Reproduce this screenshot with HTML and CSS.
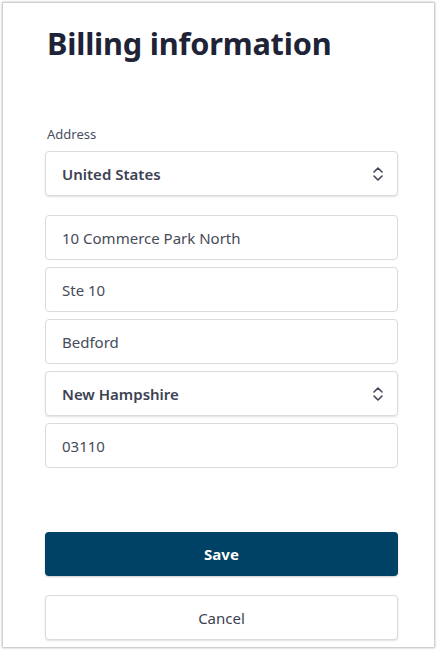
FILE: index.html
```html
<!DOCTYPE html>
<html lang="en">
<head>
<meta charset="utf-8">
<title>Billing information</title>
<link rel="stylesheet" href="styles.css">
</head>
<body>
<main class="card">
  <h1 class="title">Billing information</h1>
  <form class="form">
    <label class="label">Address</label>
    <div class="field select">
      <span>United States</span>
      <svg class="chev" width="12" height="16" viewBox="0 0 12 16"><path d="M2 6 L6 2 L10 6 M2 10 L6 14 L10 10" fill="none" stroke="#3f4556" stroke-width="1.6" stroke-linecap="round" stroke-linejoin="round"/></svg>
    </div>
    <div class="field input first">10 Commerce Park North</div>
    <div class="field input">Ste 10</div>
    <div class="field input">Bedford</div>
    <div class="field select">
      <span>New Hampshire</span>
      <svg class="chev" width="12" height="16" viewBox="0 0 12 16"><path d="M2 6 L6 2 L10 6 M2 10 L6 14 L10 10" fill="none" stroke="#3f4556" stroke-width="1.6" stroke-linecap="round" stroke-linejoin="round"/></svg>
    </div>
    <div class="field input">03110</div>
    <button type="button" class="btn save">Save</button>
    <button type="button" class="btn cancel">Cancel</button>
  </form>
</main>
</body>
</html>
```

FILE: styles.css
```css
* { box-sizing: border-box; }
html, body { margin: 0; padding: 0; background: #ffffff; }
body {
  font-family: "Noto Sans", "Open Sans", sans-serif;
  padding: 3px 4px 9px 3px;
}
.card {
  width: 431px;
  height: 644px;
  background: #fff;
  box-shadow: 0 0 2px 1px rgba(0,0,0,0.28);
  padding: 18px 36px 0 42px;
  overflow: hidden;
}
.title {
  margin: 0 0 0 2px;
  font-size: 30.7px;
  line-height: 44px;
  font-weight: 700;
  color: #1e2337;
  letter-spacing: -0.2px;
}
.form {
  display: flex;
  flex-direction: column;
  margin-top: 60px;
}
.label {
  font-size: 13px;
  line-height: 18px;
  color: #4a5062;
  margin-left: 2px;
  margin-bottom: 8px;
}
.field {
  height: 45px;
  border: 1px solid #d8dbe0;
  border-radius: 4px;
  display: flex;
  align-items: center;
  padding: 0 16px;
  font-size: 15px;
  color: #464b59;
  margin-bottom: 7px;
}
.select {
  justify-content: space-between;
  font-weight: 600;
  color: #3c4253;
  box-shadow: 0 1px 2px rgba(0,0,0,0.12);
  padding-right: 13px;
}
.input.first { margin-top: 12px; }
.btn {
  height: 44px;
  border-radius: 4px;
  font-family: "Noto Sans", "Open Sans", sans-serif;
  font-size: 15px;
  cursor: pointer;
}
.save {
  margin-top: 57px;
  background: #004266;
  color: #fff;
  border: none;
  font-weight: 700;
  box-shadow: 0 1px 2px rgba(0,0,0,0.2);
}
.cancel {
  margin-top: 19px;
  height: 45px;
  background: #fff;
  color: #3c4253;
  border: 1px solid #d8dbe0;
  box-shadow: 0 1px 2px rgba(0,0,0,0.12);
}
```
